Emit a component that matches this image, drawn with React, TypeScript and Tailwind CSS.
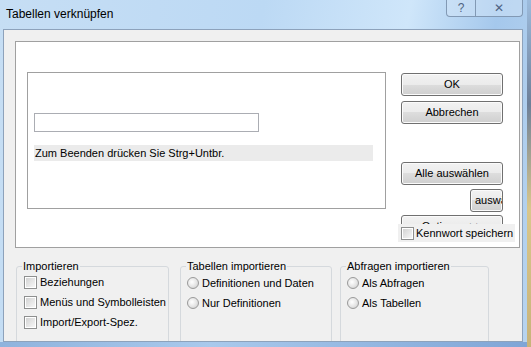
import React from 'react';

function CheckBox() {
    return (
        <span className="w-[13px] h-[13px] shrink-0 border border-[#8e8f8f] bg-white p-[1px] flex">
            <span className="flex-1 bg-gradient-to-br from-[#d3d3d3] to-[#f6f6f6]" />
        </span>
    );
}

function Radio() {
    return (
        <span className="w-[12px] h-[12px] shrink-0 rounded-full border border-[#9a9a9a] bg-[radial-gradient(circle_at_40%_40%,#ffffff_0%,#e4e4e4_55%,#c6c6c6_100%)]" />
    );
}

function Btn({ children, className = '' }: { children: React.ReactNode; className?: string }) {
    return (
        <div className={`h-[23px] rounded-[3px] border border-[#707070] shadow-[inset_0_0_0_1px_#fbfbfb] bg-[linear-gradient(#f2f2f2_0%,#ebebeb_50%,#dddddd_50%,#cfcfcf_100%)] flex items-center justify-center whitespace-nowrap overflow-hidden ${className}`}>
            {children}
        </div>
    );
}

function Group({ title, width, className = '', children }: { title: string; width: string; className?: string; children: React.ReactNode }) {
    return (
        <fieldset className={`${width} h-[100px] shrink-0 border border-[#d5d9dd] rounded-[3px] ${className}`}>
            <legend className="ml-[5px] px-[1px] leading-[13px]">{title}</legend>
            {children}
        </fieldset>
    );
}

export default function App() {
    return (
        <div className="w-[531px] h-[347px] flex overflow-hidden font-['Liberation_Sans',Arial,sans-serif] text-[11px] text-black">
            <div className="w-[527px] h-full flex flex-col bg-[linear-gradient(100deg,#c6def4_0%,#bcd9f4_45%,#cfe6fa_70%,#a5c8ec_85%,#b8d4ef_100%)]">
                {/* title bar */}
                <div className="h-[29px] flex items-start justify-between shrink-0">
                    <div className="pl-[6px] pt-[7px] text-[12px] leading-[15px]">Tabellen verknüpfen</div>
                    <div className="mr-[4px] flex h-[17px] border border-t-0 border-[#8299b4] rounded-b-[4px] bg-[#d3e6f7]/50 text-[#4f6482]">
                        <div className="w-[29px] flex items-center justify-center border-r border-[#8299b4] text-[12px]">?</div>
                        <div className="w-[46px] flex items-center justify-center text-[12px]">✕</div>
                    </div>
                </div>

                {/* client area */}
                <div className="ml-[3px] w-[520px] h-[313px] shrink-0 border border-[#8da2bb] bg-[#f0f0f0] overflow-hidden">
                    <div className="relative ml-[11px] mt-[11px] w-[505px] h-[207px] border border-[#a0a0a0] bg-white flex pl-[11px] pt-[30px]">
                        <div className="w-[359px] h-[137px] shrink-0 border border-[#a0a0a0] bg-white pl-[6px] pt-[40px]">
                            <div className="w-[225px] h-[19px] border border-[#abadb3]" />
                            <div className="mt-[13px] w-[339px] h-[16px] bg-[#ebebeb] flex items-center pl-[1px]">
                                Zum Beenden drücken Sie Strg+Untbr.
                            </div>
                        </div>
                        <div className="ml-[15px] w-[102px] flex flex-col">
                            <Btn className="mt-[1px]">OK</Btn>
                            <Btn className="mt-[5px]">Abbrechen</Btn>
                            <Btn className="mt-[38px]">Alle auswählen</Btn>
                            <Btn className="mt-[4px] w-[33px] self-end !justify-start pl-[4px]">auswählen</Btn>
                            <Btn className="mt-[3px]">Optionen &gt;&gt;</Btn>
                        </div>
                        <div className="absolute left-[382px] top-[182px] w-[117px] h-[18px] bg-[#f0f0f0] flex items-center pl-[3px] gap-[2px] whitespace-nowrap">
                            <CheckBox />
                            <span>Kennwort speichern</span>
                        </div>
                    </div>

                    <div className="flex ml-[12px] mt-[12px]">
                        <Group title="Importieren" width="w-[153px]">
                            <div className="flex flex-col pl-[7px] -mt-[1px]">
                                <div className="h-[20px] flex items-center gap-[3px]"><CheckBox /><span>Beziehungen</span></div>
                                <div className="h-[20px] flex items-center gap-[3px]"><CheckBox /><span>Menüs und Symbolleisten</span></div>
                                <div className="h-[20px] flex items-center gap-[3px]"><CheckBox /><span>Import/Export-Spez.</span></div>
                            </div>
                        </Group>
                        <Group title="Tabellen importieren" width="w-[152px]" className="ml-[11px]">
                            <div className="flex flex-col pl-[6px]">
                                <div className="h-[20px] flex items-center gap-[3px]"><Radio /><span>Definitionen und Daten</span></div>
                                <div className="h-[20px] flex items-center gap-[3px]"><Radio /><span>Nur Definitionen</span></div>
                            </div>
                        </Group>
                        <Group title="Abfragen importieren" width="w-[149px]" className="ml-[8px]">
                            <div className="flex flex-col pl-[6px]">
                                <div className="h-[20px] flex items-center gap-[3px]"><Radio /><span>Als Abfragen</span></div>
                                <div className="h-[20px] flex items-center gap-[3px]"><Radio /><span>Als Tabellen</span></div>
                            </div>
                        </Group>
                    </div>
                </div>
                <div className="flex-1 bg-[linear-gradient(90deg,#8fb3dd,#a9c9ec_40%,#7fa5d6)]" />
            </div>
            <div className="flex-1 bg-[linear-gradient(#9cbbdc_0%,#6d7f98_30%,#d9c78c_60%,#c8b37a_100%)]" />
        </div>
    );
}
